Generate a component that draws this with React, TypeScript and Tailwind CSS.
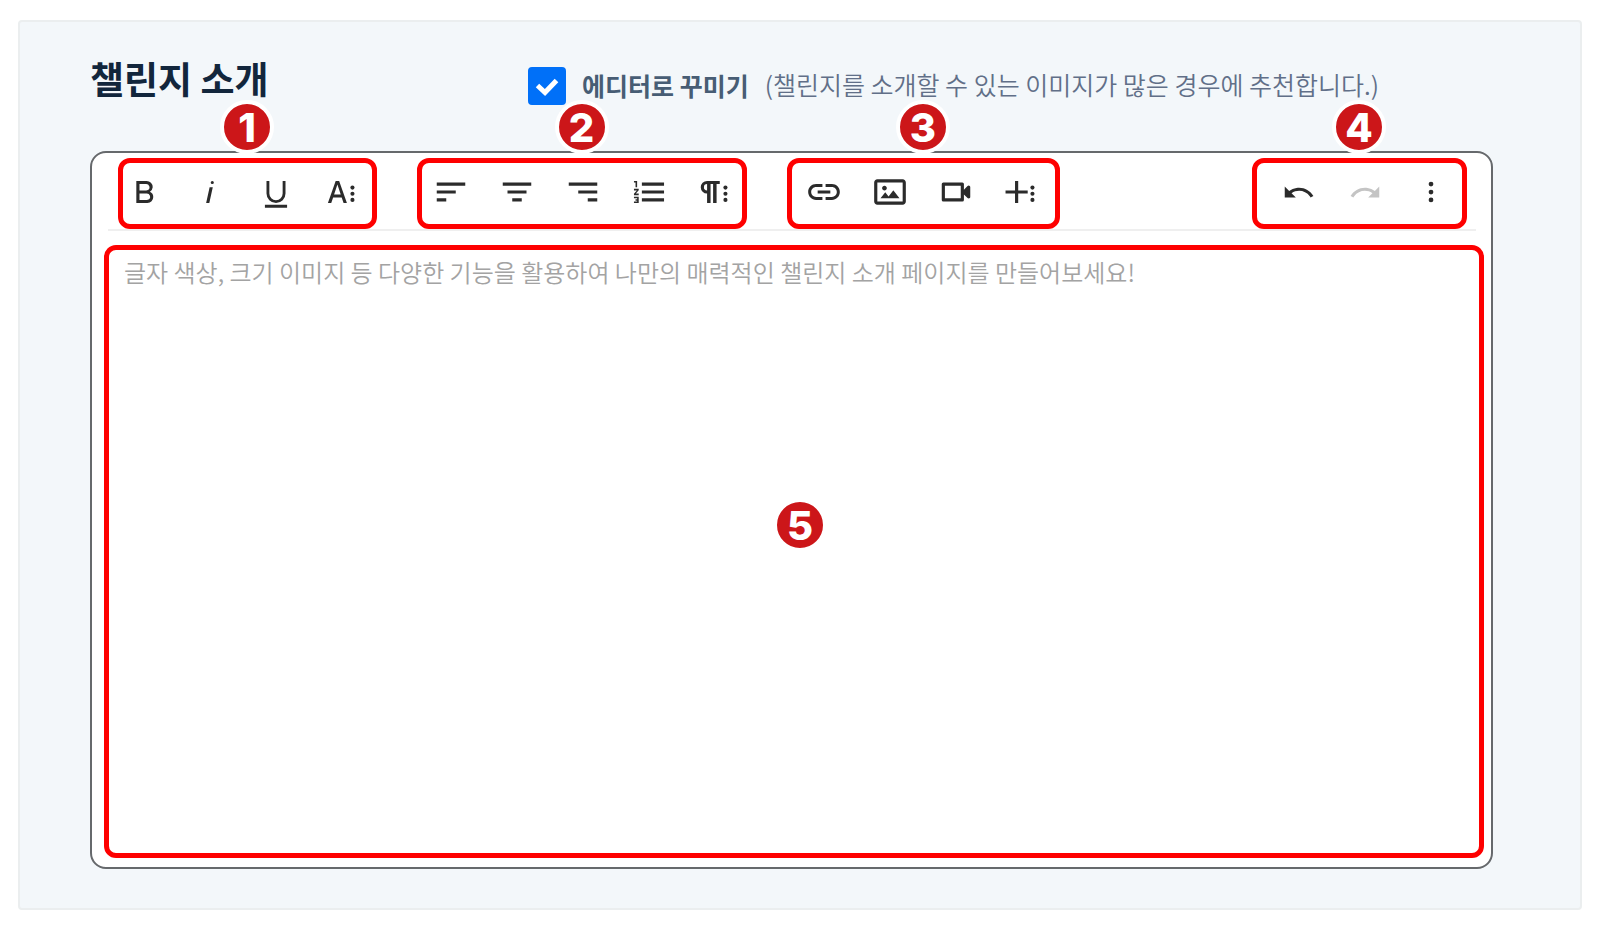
import { useState } from 'react';
import type { ReactNode } from 'react';

interface Tool {
  label: string;
  icon: ReactNode;
  disabled?: boolean;
}

const MoreDots = () => (
  <>
    <circle cx="18.6" cy="9.2" r="1.3" />
    <circle cx="18.6" cy="13.1" r="1.3" />
    <circle cx="18.6" cy="17" r="1.3" />
  </>
);

const TEXT_TOOLS: Tool[] = [
  {
    label: '굵게',
    icon: (
      <path d="M15.75,11.8h0A3.68,3.68,0,0,0,17.5,9a3.93,3.93,0,0,0-3.86-4H7.15V19h7a3.74,3.74,0,0,0,3.7-3.78V15.1A3.64,3.64,0,0,0,15.75,11.8ZM9.15,7h4.2a2.09,2.09,0,0,1,2,1.3,2.09,2.09,0,0,1-1.37,2.61,2.23,2.23,0,0,1-.63.09H9.15Zm4.6,10H9.15V13h4.6a2.09,2.09,0,0,1,2,1.3,2.09,2.09,0,0,1-1.37,2.61A2.23,2.23,0,0,1,13.75,17Z" />
    ),
  },
  { label: '기울임', icon: <path d="M11.76,9h2l-2.2,10h-2Zm1.68-4a1,1,0,1,0,1,1,1,1,0,0,0-1-1Z" /> },
  {
    label: '밑줄',
    icon: <path d="M19,20v2H5V20ZM6,5H7.8v8a4.2,4.2,0,0,0,8.4,0V5H18v8a6,6,0,0,1-12,0Z" />,
  },
  {
    label: '글자 더보기',
    icon: (
      <>
        <path d="M8,5h2.2l4.9,14h-2.1l-1.2-3.6H6.4L5.2,19H3.1ZM7,13.6h4.2L9.1,7.2Z" />
        <MoreDots />
      </>
    ),
  },
];

const PARAGRAPH_TOOLS: Tool[] = [
  { label: '왼쪽 정렬', icon: <path d="M3,6V8H21V6ZM3,13H15V11H3Zm0,5H9V16H3Z" /> },
  { label: '가운데 정렬', icon: <path d="M3,6V8H21V6ZM6,13H18V11H6Zm3,5h6V16H9Z" /> },
  { label: '오른쪽 정렬', icon: <path d="M3,6V8H21V6ZM9,13H21V11H9Zm6,5h6V16H15Z" /> },
  {
    label: '번호 목록',
    icon: (
      <path d="M2.5,16h2v.5h-1v1h1V18h-2v1h3V15h-3Zm1-7h1V5h-2V6h1Zm-1,2H4.3L2.5,13.1V14h3V13H3.7l1.8-2.1V10h-3Zm5-5V8h14V6Zm0,12h14V16H7.5Zm0-5h14V11H7.5Z" />
    ),
  },
  {
    label: '문단 더보기',
    icon: (
      <>
        <path d="M7,5a4,4,0,0,0,0,8v6h2.2V7h1.6V19h2.2V7h2V5ZM5,9a2,2,0,0,1,2-2v4A2,2,0,0,1,5,9Z" />
        <MoreDots />
      </>
    ),
  },
];

const INSERT_TOOLS: Tool[] = [
  {
    label: '링크',
    icon: (
      <path d="M3.9 12c0-1.71 1.39-3.1 3.1-3.1h4V7H7c-2.76 0-5 2.24-5 5s2.24 5 5 5h4v-1.9H7c-1.71 0-3.1-1.39-3.1-3.1zM8 13h8v-2H8v2zm9-6h-4v1.9h4c1.71 0 3.1 1.39 3.1 3.1s-1.39 3.1-3.1 3.1h-4V17h4c2.76 0 5-2.24 5-5s-2.24-5-5-5z" />
    ),
  },
  {
    label: '이미지',
    icon: (
      <path d="M14.2,11l3.8,5H6l3-3.9l2.1,2.7L14,11H14.2z M8.5,11c0.8,0,1.5-0.7,1.5-1.5S9.3,8,8.5,8S7,8.7,7,9.5C7,10.3,7.7,11,8.5,11z M22,6v12c0,1.1-0.9,2-2,2H4c-1.1,0-2-0.9-2-2V6c0-1.1,0.9-2,2-2h16C21.1,4,22,4.9,22,6z M20,8.8V6H4v12h16V8.8z" />
    ),
  },
  {
    label: '동영상',
    icon: (
      <path d="M15,8v8H5V8H15m2,2.5V7a1,1,0,0,0-1-1H4A1,1,0,0,0,3,7V17a1,1,0,0,0,1,1H16a1,1,0,0,0,1-1V13.5l2.29,2.29A1,1,0,0,0,21,15.08V8.91a1,1,0,0,0-1.71-.71Z" />
    ),
  },
  {
    label: '삽입 더보기',
    icon: (
      <>
        <path d="M7.6,5h2v6h6v2h-6V19h-2V13h-6V11h6Z" />
        <MoreDots />
      </>
    ),
  },
];

const HISTORY_TOOLS: Tool[] = [
  {
    label: '실행 취소',
    icon: (
      <path d="M10.4,9.4c-1.7,0.3-3.2,0.9-4.6,2L3,8.5v7h7l-2.7-2.7c3.7-2.6,8.8-1.8,11.5,1.9c0.2,0.2,0.3,0.5,0.5,0.7l1.8-0.9C18.9,10.8,14.7,8.7,10.4,9.4z" />
    ),
  },
  {
    label: '다시 실행',
    disabled: true,
    icon: (
      <path d="M13.6,9.4c1.7,0.3,3.2,0.9,4.6,2L21,8.5v7h-7l2.7-2.7C13,10.2,7.9,11,5.2,14.7c-0.2,0.2-0.3,0.5-0.5,0.7l-1.8-0.9C5.1,10.8,9.3,8.7,13.6,9.4z" />
    ),
  },
  {
    label: '더보기',
    icon: (
      <>
        <circle cx="12" cy="7" r="1.5" />
        <circle cx="12" cy="12" r="1.5" />
        <circle cx="12" cy="17" r="1.5" />
      </>
    ),
  },
];

function Badge({ n }: { n: number }) {
  return (
    <span className="flex size-[54px] items-center justify-center rounded-full border-4 border-white bg-[#cc1619] pt-0.5 font-['Inter',sans-serif] text-[40px] leading-none font-extrabold text-white">
      {n}
    </span>
  );
}

function ToolGroup({ n, tools, className }: { n: number; tools: Tool[]; className: string }) {
  return (
    <div
      className={`relative flex h-[71px] items-center gap-6 rounded-xl border-[5px] border-[#fe0000] pb-1 ${className}`}
    >
      <div className="absolute inset-x-0 -top-[63px] flex justify-center pr-px">
        <Badge n={n} />
      </div>
      {tools.map((t) => (
        <button
          key={t.label}
          type="button"
          aria-label={t.label}
          disabled={t.disabled}
          className="flex h-12 w-[42px] items-center justify-center text-[#2b2b2b] disabled:text-[#c4c4c4]"
        >
          <svg viewBox="0 0 24 24" className="size-[38px]" fill="currentColor">
            {t.icon}
          </svg>
        </button>
      ))}
    </div>
  );
}

export default function App() {
  const [useEditor, setUseEditor] = useState(true);
  const [content, setContent] = useState('');

  return (
    <div className="flex min-h-screen bg-white px-[18px] py-5 font-['Noto_Sans_CJK_KR',sans-serif]">
      <main className="flex flex-1 flex-col rounded-sm border-2 border-[#ebeeef] bg-[#f3f7fa] pt-8 pr-[87px] pb-[39px] pl-[70px]">
        {/* Heading row */}
        <div className="flex h-[97px] items-start">
          <h1 className="w-[438px] pt-1 text-[37px] leading-10 font-bold text-[#12263c]">챌린지 소개</h1>
          <div className="flex items-start pt-[13px]">
            <span className="relative flex">
              <input
                id="use-editor"
                type="checkbox"
                checked={useEditor}
                onChange={(e) => setUseEditor(e.target.checked)}
                className="peer size-[38px] appearance-none rounded-sm border-2 border-[#0070f8] bg-white checked:bg-[#0070f8]"
              />
              <svg
                viewBox="0 0 38 38"
                className="pointer-events-none absolute inset-0 hidden size-[38px] peer-checked:block"
                fill="none"
                stroke="#ffffff"
                strokeWidth="5"
              >
                <path d="M9.5 18.5 L17 25.5 L28.5 13.5" />
              </svg>
            </span>
            <label htmlFor="use-editor" className="ml-4 text-[25px] leading-9 font-bold text-[#475d74]">
              에디터로 꾸미기
            </label>
            <span className="ml-4 text-[25px] leading-[34px] font-[350] text-[#616f88]">
              (챌린지를 소개할 수 있는 이미지가 많은 경우에 추천합니다.)
            </span>
          </div>
        </div>

        {/* Editor */}
        <section className="flex flex-1 flex-col rounded-2xl border-2 border-[#66696c] bg-white pr-[7px] pb-[9px] pl-3">
          <div className="mr-2 ml-1 flex gap-10 border-b-2 border-[#efefef] pt-[5px] pr-[9px] pl-2.5">
            <ToolGroup n={1} tools={TEXT_TOOLS} className="pr-[9px]" />
            <ToolGroup n={2} tools={PARAGRAPH_TOOLS} className="pr-1.5 pl-2" />
            <ToolGroup n={3} tools={INSERT_TOOLS} className="pr-3 pl-[11px]" />
            <ToolGroup n={4} tools={HISTORY_TOOLS} className="ml-auto pr-2.5 pl-[21px]" />
          </div>

          <div className="relative mt-3.5 flex flex-1 rounded-xl border-[5px] border-[#fe0000]">
            <textarea
              aria-label="챌린지 소개 내용"
              value={content}
              onChange={(e) => setContent(e.target.value)}
              placeholder="글자 색상, 크기 이미지 등 다양한 기능을 활용하여 나만의 매력적인 챌린지 소개 페이지를 만들어보세요!"
              className="flex-1 resize-none px-[15px] py-1 text-2xl leading-9 font-[350] text-[#333333] outline-none placeholder:text-[#a3a3a3]"
            />
            <div className="pointer-events-none absolute inset-0 flex items-center justify-center pb-[54px] pl-3">
              <Badge n={5} />
            </div>
          </div>
        </section>
      </main>
    </div>
  );
}
